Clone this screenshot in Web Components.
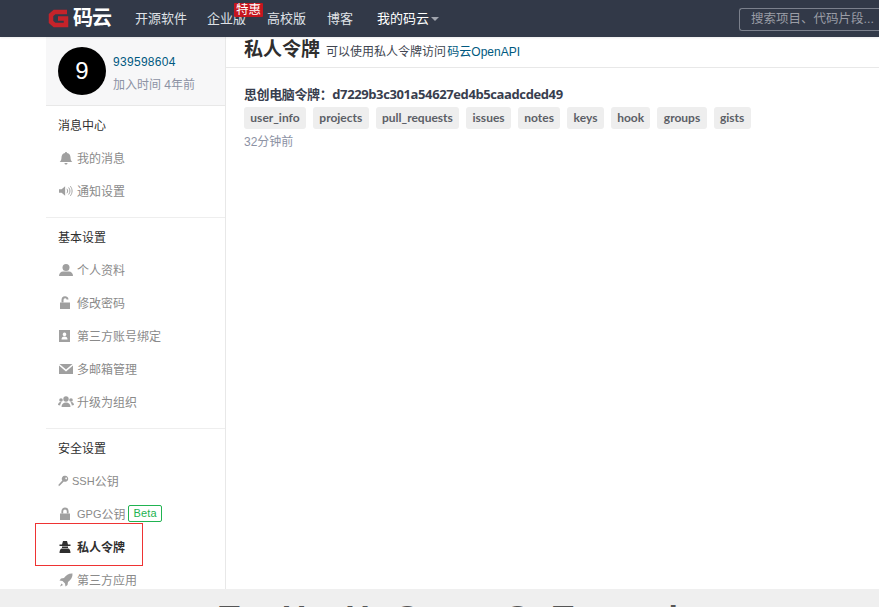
<!DOCTYPE html>
<html>
<head>
<meta charset="utf-8">
<style>
    html, body { margin: 0; height: 607px; overflow: hidden; background: #fff; }
    body { font-family: "Liberation Sans", "Noto Sans CJK SC", sans-serif; }
</style>
</head>
<body>
<app-page></app-page>
<script>
const ICONS = {
    bell: '<path d="M7 1c.6 0 1 .4 1 1 2.300.5 3.500 2.200 3.500 4.500 0 2.500.8 3.500 1.800 4.500H.7c1-1 1.800-2 1.800-4.500C2.500 4.200 3.700 2.500 6 2c0-.6.4-1 1-1zM5.500 12h3c0 1-.7 1.600-1.500 1.600S5.500 13 5.500 12z"/>',
    volume: '<path d="M0 5h3l4-3.500v11L3 9H0z"/><path d="M9 4.500c1.200 1.500 1.200 3.500 0 5M11 3c2 2.500 2 5.500 0 8M13 1.500c2.600 3.500 2.600 7.500 0 11" fill="none" stroke="currentColor" stroke-width="1.100"/>',
    user: '<circle cx="7" cy="4.500" r="3.500"/><path d="M0 13c0-3 2-4.500 4-4.500h6c2 0 4 1.500 4 4.500z"/>',
    unlock: '<path d="M1 6.500h10V13H1z"/><path d="M3.500 6.500V4c0-3.500 5-3.500 5-.5" fill="none" stroke="currentColor" stroke-width="2"/>',
    card: '<path fill-rule="evenodd" d="M0 1h11v12H0zM5.500 3.500a1.800 1.800 0 1 0 .01 0zM2.500 10.500h6c0-2-1-3-3-3s-3 1-3 3z"/>',
    mail: '<path d="M.5 2h13L7 7.500zM0 3.500v8.500h14V3.500L7 9.500z"/>',
    users: '<circle cx="8" cy="4" r="2.700"/><path d="M3.500 12c0-3 1.800-4.500 4.500-4.500s4.500 1.500 4.500 4.500z"/><circle cx="3" cy="5" r="1.800"/><circle cx="13" cy="5" r="1.800"/><path d="M0 10c0-1.500 1-3 2.500-3l1 .5C2.500 8.500 2.200 9.500 2.200 10.500zM16 10c0-1.500-1-3-2.500-3l-1 .5c1 1 1.300 2 1.300 3z"/>',
    key: '<path fill-rule="evenodd" d="M8.500 1a3.500 3.500 0 1 1-1.700 6.600L2.500 12 1 13l-.5-1.500L5 6.500A3.500 3.500 0 0 1 8.500 1zM9.500 3a1 1 0 1 0 .01 0z"/>',
    lock: '<path d="M1 6.500h10V13H1z"/><path d="M3.300 6.500V4.200c0-3.600 5.400-3.600 5.400 0v2.300" fill="none" stroke="currentColor" stroke-width="1.800"/>',
    secret: '<path d="M4 1h4l1 3.500H3zM.5 4.500h11V6H.5zM3 6.500h6V8H3zM.5 13c0-2.500 1-4.500 2.500-4.500h6c1.500 0 2.500 2 2.500 4.500zM5.500 9.500h1v3h-1z"/>',
    rocket: '<path d="M13.500.5c.3 3.500-1.500 6.500-4.500 8.500l-.5 3-2 1.500-.5-3L3.500 8 .5 7.500 2 5.500l3-.5C7 2 10 .2 13.500.5zM2.500 10.500l1.500 1.500-3 1.500z"/>'
};

class AppIcon extends HTMLElement {
    constructor() {
        super();
        const name = this.getAttribute('name');
        const w = this.getAttribute('w') || 14;
        const vb = this.getAttribute('vb') || '0 0 14 14';
        this.attachShadow({ mode: 'open' }).innerHTML = `
            <style>:host { display: inline-flex; } svg { fill: currentColor; display: block; }</style>
            <svg width="${w}" height="14" viewBox="${vb}">${ICONS[name]}</svg>`;
    }
}
customElements.define('app-icon', AppIcon);

const headerTpl = document.createElement('template');
headerTpl.innerHTML = `
    <style>
        :host { display: flex; align-items: center; height: 37px; background: #323948; color: #dfe1e6; font-size: 13px; padding-left: 48px; box-shadow: 0 1px 2px rgba(0,0,0,.08); position: relative; z-index: 2; }
        .logo { display: flex; align-items: center; gap: 4px; width: 87px; color: #fff; font-size: 20px; font-weight: 700; line-height: 37px; letter-spacing: -1px; }
        nav { display: flex; align-items: center; gap: 20px; flex: 1; padding-bottom: 2px; }
        a { position: relative; white-space: nowrap; }
        .mine { color: #fff; margin-left: 4px; }
        .caret { display: inline-block; border: 4px solid transparent; border-top-color: #a0a4ad; border-bottom: 0; margin-left: 2px; vertical-align: 2px; }
        .badge { position: absolute; left: 27px; top: -5px; background: #c5161e; color: #fff; font-size: 12.500px; line-height: 14px; padding: 0 2px; white-space: nowrap; border-radius: 1px; }
        .search { width: 128px; height: 21px; margin-top: 2px; border: 1px solid #7b808c; border-right: 0; border-radius: 3px 0 0 3px; color: #9a9da6; font-size: 12.500px; line-height: 21px; padding-left: 11px; white-space: nowrap; overflow: hidden; }
    </style>
    <div class="logo">
        <svg width="21" height="19" viewBox="0 0 21 19"><path d="M19 3H6.500L3 6v7l3.500 3H18V9.500H10" fill="none" stroke="#c5232a" stroke-width="4.500"/></svg>
        <span>码云</span>
    </div>
    <nav>
        <a>开源软件</a>
        <a>企业版<span class="badge">特惠</span></a>
        <a style="margin-left:1px">高校版</a>
        <a style="margin-left:1px">博客</a>
        <a class="mine">我的码云<i class="caret"></i></a>
    </nav>
    <div class="search">搜索项目、代码片段...</div>
`;
class AppHeader extends HTMLElement {
    constructor() {
        super();
        this.attachShadow({ mode: 'open' }).appendChild(headerTpl.content.cloneNode(true));
    }
}
customElements.define('app-header', AppHeader);

const profileTpl = document.createElement('template');
profileTpl.innerHTML = `
    <style>
        :host { display: flex; align-items: center; gap: 7px; height: 69px; box-sizing: border-box; padding-left: 12px; background: #f7f7f8; border-bottom: 1px solid #e8e8e8; }
        .avatar { width: 48px; height: 48px; border-radius: 50%; background: #000; color: #fff; font: 24px/48px "Liberation Sans", sans-serif; text-align: center; }
        .info { padding-top: 5px; }
        .name { color: #005980; font-size: 12px; line-height: 16px; letter-spacing: .3px; }
        .time { color: #8c92a4; font-size: 12px; line-height: 16px; margin-top: 7px; }
    </style>
    <div class="avatar">9</div>
    <div class="info">
        <div class="name">939598604</div>
        <div class="time">加入时间 4年前</div>
    </div>
`;
class UserProfile extends HTMLElement {
    constructor() {
        super();
        this.attachShadow({ mode: 'open' }).appendChild(profileTpl.content.cloneNode(true));
    }
}
customElements.define('user-profile', UserProfile);

const groupTpl = document.createElement('template');
groupTpl.innerHTML = `
    <style>
        :host { display: block; padding: 6px 0 10px; border-bottom: 1px solid #eeeeee; }
        :host(:last-of-type) { border-bottom: 0; }
        h4 { margin: 0; padding-left: 12px; font-size: 12px; font-weight: 400; line-height: 29px; color: #2f2f2f; }
    </style>
    <h4></h4>
    <slot></slot>
`;
class MenuGroup extends HTMLElement {
    constructor() {
        super();
        this.attachShadow({ mode: 'open' }).appendChild(groupTpl.content.cloneNode(true));
        this.shadowRoot.querySelector('h4').innerText = this.getAttribute('title');
    }
}
customElements.define('menu-group', MenuGroup);

const itemTpl = document.createElement('template');
itemTpl.innerHTML = `
    <style>
        :host { display: flex; align-items: center; height: 33px; padding-left: 13px; font-size: 12px; color: #8a8a8a; white-space: nowrap; }
        :host([active]) { color: #2f2f2f; font-weight: 700; }
        .ic { width: var(--ic, 18px); display: flex; color: #a0a0a0; flex: none; }
        :host([active]) .ic { color: #2f2f2f; }
    </style>
    <span class="ic"><slot name="icon"></slot></span>
    <slot></slot>
`;
class MenuItem extends HTMLElement {
    constructor() {
        super();
        this.attachShadow({ mode: 'open' }).appendChild(itemTpl.content.cloneNode(true));
    }
}
customElements.define('menu-item', MenuItem);

const betaTpl = document.createElement('template');
betaTpl.innerHTML = `
    <style>
        :host { display: inline-block; margin-left: 3px; padding: 0 4px; border: 1px solid #21b351; border-radius: 2px; color: #21b351; font-size: 11px; line-height: 15px; letter-spacing: .2px; }
    </style>
    <slot></slot>
`;
class BetaTag extends HTMLElement {
    constructor() {
        super();
        this.attachShadow({ mode: 'open' }).appendChild(betaTpl.content.cloneNode(true));
    }
}
customElements.define('beta-tag', BetaTag);

const scopeTpl = document.createElement('template');
scopeTpl.innerHTML = `
    <style>
        :host { display: inline-block; padding: 0 6.350px; background: #eeeeee; border-radius: 3px; color: #5c5f66; font: 700 12px/22px Lato, "Liberation Sans", sans-serif; }
    </style>
    <slot></slot>
`;
class ScopeTag extends HTMLElement {
    constructor() {
        super();
        this.attachShadow({ mode: 'open' }).appendChild(scopeTpl.content.cloneNode(true));
    }
}
customElements.define('scope-tag', ScopeTag);

const tokenTpl = document.createElement('template');
tokenTpl.innerHTML = `
    <style>
        :host { display: block; padding-top: 16px; }
        .name { color: #383e4e; font: 700 13px/20px "Open Sans", "Noto Sans CJK SC", sans-serif; letter-spacing: -.39px; white-space: nowrap; }
        .scopes { display: flex; gap: 7px; margin-top: 3px; }
        .time { color: #8c92a4; font-size: 12px; line-height: 16px; margin-top: 5px; }
    </style>
    <div class="name"></div>
    <div class="scopes"><slot></slot></div>
    <div class="time"></div>
`;
class TokenItem extends HTMLElement {
    constructor() {
        super();
        this.attachShadow({ mode: 'open' }).appendChild(tokenTpl.content.cloneNode(true));
        this.shadowRoot.querySelector('.name').innerText = this.getAttribute('name');
        this.shadowRoot.querySelector('.time').innerText = this.getAttribute('time');
    }
}
customElements.define('token-item', TokenItem);

const footerTpl = document.createElement('template');
footerTpl.innerHTML = `
    <style>
        :host { display: block; height: 18px; overflow: hidden; background: #efefef; }
        .t { display: flex; padding: 8px 0 0 219px; color: #555; font: 700 34px/40px "Liberation Sans", sans-serif; white-space: nowrap; }
        .t span:nth-child(2) { margin-left: 42px; }
        .t span:nth-child(3) { margin-left: 39px; }
        .t span:nth-child(4) { margin-left: 24px; }
        .t span:nth-child(5) { margin-left: 84px; }
        .t span:nth-child(6) { margin-left: 22px; }
        .t span:nth-child(7) { margin-left: 95px; }
    </style>
    <div class="t"><span>T</span><span>H</span><span>H</span><span>O</span><span>O</span><span>T</span><span>i</span></div>
`;
class AppFooter extends HTMLElement {
    constructor() {
        super();
        this.attachShadow({ mode: 'open' }).appendChild(footerTpl.content.cloneNode(true));
    }
}
customElements.define('app-footer', AppFooter);

const pageTpl = document.createElement('template');
pageTpl.innerHTML = `
    <style>
        :host { display: flex; flex-direction: column; height: 607px; position: relative; overflow: hidden; }
        .body { display: flex; height: 552px; overflow: hidden; padding-left: 46px; }
        aside { width: 179px; flex: none; border-right: 1px solid #e8e8e8; }
        main { flex: 1; padding-left: 18px; min-width: 0; }
        header { display: flex; align-items: baseline; gap: 6px; height: 30px; border-bottom: 1px solid #e8e8e8; margin-left: -18px; padding-left: 18px; white-space: nowrap; }
        h2 { margin: 0; font-size: 19px; line-height: 26px; color: #2f2f2f; }
        header span { font-size: 12px; color: #404550; word-spacing: -2px; }
        header a { color: #005980; word-spacing: 0; }
        .mark { position: absolute; left: 35px; top: 523px; width: 106px; height: 41px; border: 1px solid #ee3333; }
    </style>
    <app-header></app-header>
    <div class="body">
        <aside><slot name="side"></slot></aside>
        <main>
            <header><h2>私人令牌</h2><span>可以使用私人令牌访问 <a>码云OpenAPI</a></span></header>
            <slot></slot>
        </main>
    </div>
    <app-footer></app-footer>
    <div class="mark"></div>
`;
class AppPage extends HTMLElement {
    constructor() {
        super();
        this.attachShadow({ mode: 'open' }).appendChild(pageTpl.content.cloneNode(true));
        this.innerHTML = `
            <div slot="side">
                <user-profile></user-profile>
                <menu-group title="消息中心">
                    <menu-item><app-icon slot="icon" name="bell"></app-icon>我的消息</menu-item>
                    <menu-item><app-icon slot="icon" name="volume" w="14" vb="0 0 16 14"></app-icon>通知设置</menu-item>
                </menu-group>
                <menu-group title="基本设置">
                    <menu-item><app-icon slot="icon" name="user"></app-icon>个人资料</menu-item>
                    <menu-item><app-icon slot="icon" name="unlock"></app-icon>修改密码</menu-item>
                    <menu-item><app-icon slot="icon" name="card"></app-icon>第三方账号绑定</menu-item>
                    <menu-item><app-icon slot="icon" name="mail"></app-icon>多邮箱管理</menu-item>
                    <menu-item style="padding-left:12px;--ic:19px"><app-icon slot="icon" name="users" w="16" vb="0 0 16 14"></app-icon>升级为组织</menu-item>
                </menu-group>
                <menu-group title="安全设置">
                    <menu-item style="padding-left:12px;--ic:14px"><app-icon slot="icon" name="key" w="12" vb="0 0 14 14"></app-icon><span style="font-size:11px">SSH</span>公钥</menu-item>
                    <menu-item><app-icon slot="icon" name="lock"></app-icon><span style="font-size:11px">GPG</span>公钥<beta-tag>Beta</beta-tag></menu-item>
                    <menu-item active><app-icon slot="icon" name="secret"></app-icon>私人令牌</menu-item>
                    <menu-item><app-icon slot="icon" name="rocket"></app-icon>第三方应用</menu-item>
                </menu-group>
            </div>
            <token-item name="思创电脑令牌：d7229b3c301a54627ed4b5caadcded49" time="32分钟前">
                <scope-tag>user_info</scope-tag>
                <scope-tag>projects</scope-tag>
                <scope-tag>pull_requests</scope-tag>
                <scope-tag>issues</scope-tag>
                <scope-tag>notes</scope-tag>
                <scope-tag>keys</scope-tag>
                <scope-tag>hook</scope-tag>
                <scope-tag>groups</scope-tag>
                <scope-tag>gists</scope-tag>
            </token-item>`;
    }
}
customElements.define('app-page', AppPage);
</script>
</body>
</html>
